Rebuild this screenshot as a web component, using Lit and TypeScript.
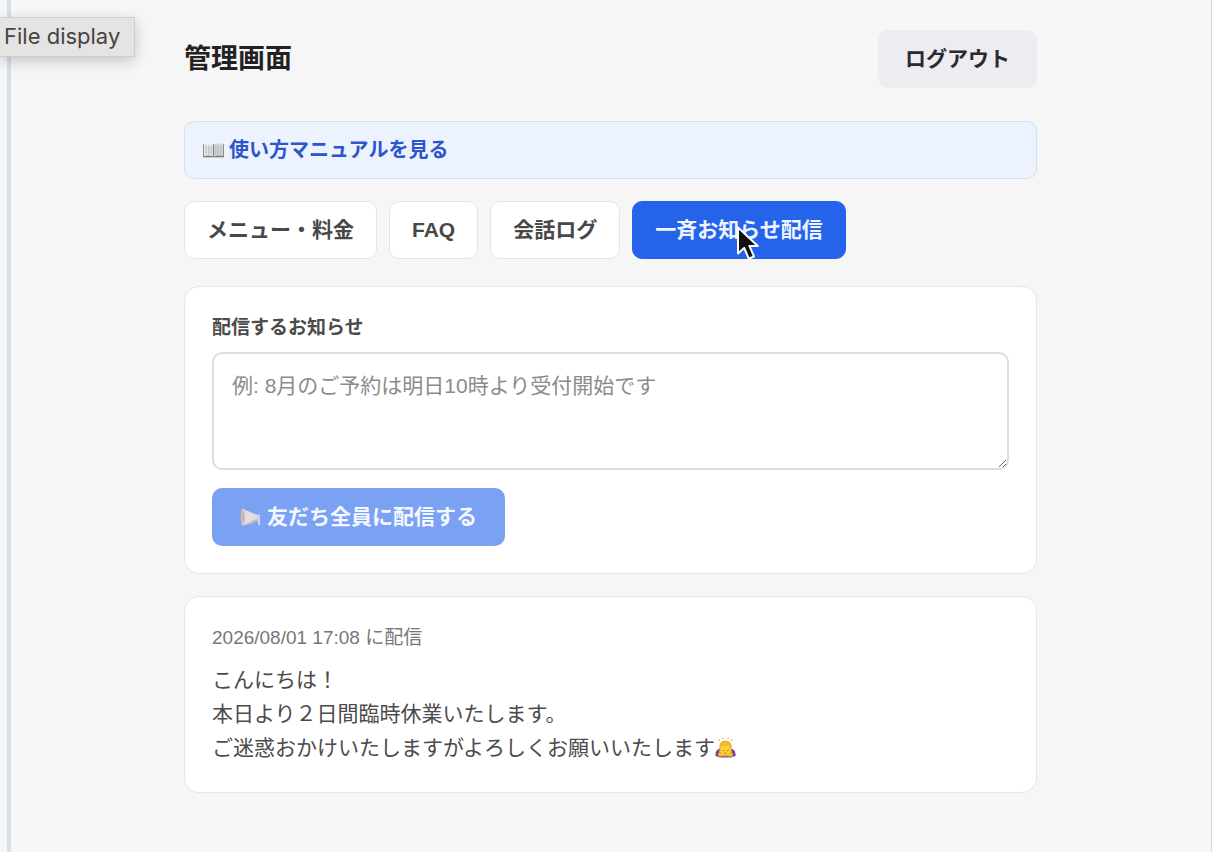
import { LitElement, html, css } from "lit";
import { customElement, state } from "lit/decorators.js";
import { classMap } from "lit/directives/class-map.js";

const bookIcon = html`<svg class="emoji" viewBox="0 0 20 20" aria-hidden="true">
  <path d="M0 4h20v12.500H0z" fill="#7b7e82" />
  <path d="M.8 3.600Q6 2.400 10 4.200V15.600Q6 14.200.8 15.200z" fill="#e6e7ea" />
  <path d="M19.200 3.600Q14 2.400 10 4.200V15.600q4-1.400 9.200-.4z" fill="#d3d5d9" />
  <path d="M3 5.500v8M5.500 5.500v8M7.800 5.500v8M12.200 5.500v8M14.500 5.500v8M17 5.500v8" stroke="#b5b8bd" stroke-width="1" />
  <path d="M10 4.200V16" stroke="#777b80" stroke-width="1" />
</svg>`;

const megaphoneIcon = html`<svg class="emoji" viewBox="0 0 22 22" aria-hidden="true">
  <path d="M7 13l2.600 4.500 3.600-.8-1.400-3.400" fill="none" stroke="#b6bed6" stroke-width="1.500" />
  <path d="M2 1.500L18 8.500v6L2 20z" fill="#e2dedc" />
  <path d="M2 20l16-8v2.500L2 20z" fill="#bdbac2" />
  <ellipse cx="3" cy="10.800" rx="2.200" ry="9.200" fill="#d6c1b5" />
  <ellipse cx="3.400" cy="10.800" rx="1.200" ry="6" fill="#c3b3ae" />
  <path d="M17.500 7.500l3.500.5v11l-1.500.3-1.500-5z" fill="#cdd3e6" />
</svg>`;

const bowIcon = html`<svg class="emoji" viewBox="0 0 22 22" role="img" aria-label="🙇">
  <path d="M.5 20q-.6-7 5-8h11q5.600 1 5 8l-5 1.500H5.500z" fill="#7a3f96" />
  <path d="M4.500 12Q4 4 11 4T17.500 12l.5 5q-1 3.500-7 3.500T4 17z" fill="#e3a21d" />
  <ellipse cx="11" cy="13.500" rx="5.600" ry="5.600" fill="#fbd23c" />
  <path d="M5 11Q5.500 5 11 5t6 6q-6-3-12 0z" fill="#f4bd25" />
  <path d="M7.800 14q1 1 2 0M12.200 14q1 1 2 0M9.800 17h2.400" fill="none" stroke="#9b5d16" stroke-width=".9" />
  <path d="M3 17.500q2-1.500 4.500 0l.5 3H4zM19 17.500q-2-1.500-4.500 0l-.5 3h4z" fill="#f5c02c" />
  <path d="M5 4L3.800 2.500M8.500 2.500L8 .8M13.500 2.500L14 .8M17 4l1.200-1.500" stroke="#efa95a" stroke-width="1.200" />
</svg>`;

const TABS = ["メニュー・料金", "FAQ", "会話ログ", "一斉お知らせ配信"];

@customElement("app-root")
export class AppRoot extends LitElement {
  @state() private active = 3;

  static styles = css`
    :host {
      display: block;
      position: relative;
      box-sizing: border-box;
      min-height: 100vh;
      background: #f6f6f6;
      color: #4b4b4b;
      font-family: "Liberation Sans", "Noto Sans CJK JP", sans-serif;
      font-size: 21px;
      line-height: 34px;
    }
    * {
      box-sizing: border-box;
    }
    .frame {
      min-height: 100vh;
      border-left: 4px solid #d8dfe5;
      border-right: 1px solid #cfd8e4;
      margin-left: 7px;
      box-shadow: -7px 0 0 #f3f7fa;
      padding: 30px 25px 30px 24px;
    }
    main {
      display: flex;
      flex-direction: column;
      max-width: 853px;
      margin: 0 auto;
    }
    header {
      display: flex;
      justify-content: space-between;
      align-items: center;
    }
    h1 {
      margin: 0;
      font-size: 27px;
      font-weight: 700;
      color: #222;
    }
    button {
      font: inherit;
      font-weight: 700;
      height: 58px;
      margin: 0;
      border: 1px solid transparent;
      border-radius: 10px;
      white-space: nowrap;
      display: flex;
      align-items: center;
    }
    .logout {
      padding: 0 26px;
      background: #ededf1;
      color: #2b2b2d;
    }
    .manual {
      display: flex;
      align-items: center;
      gap: 5px;
      height: 58px;
      margin-top: 33px;
      padding: 0 18px;
      border: 1px solid #cfdff5;
      border-radius: 10px;
      background: #edf3fe;
      color: #2f55cb;
      font-size: 20px;
      font-weight: 700;
      text-decoration: none;
    }
    nav {
      display: flex;
      flex-wrap: wrap;
      gap: 12px;
      margin-top: 22px;
    }
    .tab {
      padding: 0 22px;
      background: #fff;
      border-color: #e5e5e6;
      color: #484848;
    }
    .tab.active {
      background: #2563eb;
      border-color: #2563eb;
      color: #eef4ff;
    }
    .card {
      padding: 24px 27px 27px;
      border: 1px solid #e6e6e7;
      border-radius: 15px;
      background: #fff;
    }
    .compose {
      display: flex;
      flex-direction: column;
      align-items: flex-start;
      margin-top: 27px;
    }
    label {
      font-size: 19px;
      font-weight: 700;
    }
    textarea {
      display: block;
      width: 100%;
      height: 118px;
      margin: 7px 0 18px;
      padding: 15px 18px;
      border: 2px solid #dcdddd;
      border-radius: 10px;
      background: #fff;
      color: #333;
      font: inherit;
      resize: vertical;
    }
    textarea::placeholder {
      color: #8b8b8b;
    }
    .send {
      gap: 6px;
      padding: 0 27px;
      background: #7ba1f3;
      color: #f3f7ff;
    }
    .history {
      margin-top: 22px;
    }
    time {
      display: block;
      font-size: 19px;
      color: #777;
    }
    .history p {
      margin: 8px 0 0;
    }
    .emoji {
      width: 21px;
      height: 21px;
      flex: none;
    }
    p .emoji {
      vertical-align: -3px;
    }
    .tooltip {
      position: absolute;
      left: 0;
      top: 17px;
      height: 40px;
      padding: 0 14px 0 4px;
      border: 1px solid #cfcecd;
      border-left: 0;
      background: #e6e4e2;
      color: #454443;
      font: 22px/36px Inter, sans-serif;
      box-shadow: 0 4px 14px rgba(0, 0, 0, 0.2);
    }
    .cursor {
      position: absolute;
      left: 735px;
      top: 225px;
      width: 27px;
      height: 37px;
      pointer-events: none;
    }
  `;

  render() {
    return html`
      <div class="frame">
        <main>
          <header>
            <h1>管理画面</h1>
            <button class="logout" type="button">ログアウト</button>
          </header>
          <a class="manual" href="#manual">${bookIcon}<span>使い方マニュアルを見る</span></a>
          <nav>
            ${TABS.map(
              (name, i) => html`<button
                type="button"
                class=${classMap({ tab: true, active: i === this.active })}
                @click=${() => (this.active = i)}
              >${name}</button>`
            )}
          </nav>
          <section class="card compose">
            <label for="notice">配信するお知らせ</label>
            <textarea id="notice" placeholder="例: 8月のご予約は明日10時より受付開始です"></textarea>
            <button class="send" type="button" disabled>${megaphoneIcon}<span>友だち全員に配信する</span></button>
          </section>
          <article class="card history">
            <time datetime="2026-08-01T17:08">2026/08/01 17:08 に配信</time>
            <p>こんにちは！<br />本日より２日間臨時休業いたします。<br />ご迷惑おかけいたしますがよろしくお願いいたします${bowIcon}</p>
          </article>
        </main>
      </div>
      <div class="tooltip" role="tooltip">File display</div>
      <svg class="cursor" viewBox="0 0 27 37" aria-hidden="true">
        <path d="M3 2.500v26l6.200-5.600 4.600 10.800 5.200-2.200-4.600-10.600h8.400z" fill="#111" stroke="#fff" stroke-width="2" stroke-linejoin="round" />
      </svg>
    `;
  }
}
